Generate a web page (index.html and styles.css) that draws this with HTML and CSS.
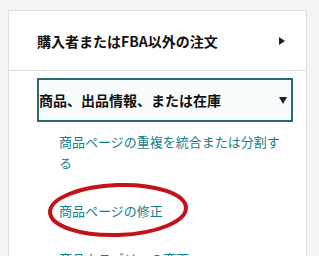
FILE: index.html
```html
<!doctype html>
<html lang="ja">
  <head>
    <meta charset="UTF-8" />
    <title>ヘルプ トピック</title>
    <link rel="stylesheet" href="styles.css">
  </head>
  <body>
    <div class="topic-panel">
      <div class="topic-row">
        <span class="topic-label">購入者またはFBA以外の注文</span>
        <span class="arrow-right"></span>
      </div>

      <div class="topic-open">
        <div class="topic-box">
          <span class="topic-label">商品、出品情報、または在庫</span>
          <span class="arrow-down"></span>
        </div>

        <ul class="sub-links">
          <li><a href="#">商品ページの重複を統合または分割する</a></li>
          <li class="marked">
            <a href="#">商品ページの修正</a>
            <!-- 赤丸の書き込み -->
            <svg class="mark" width="146" height="60" viewBox="0 0 146 60">
              <ellipse cx="72" cy="29" rx="68" ry="25" fill="none" stroke="#c41218" stroke-width="4" transform="rotate(-2 72 29)" />
            </svg>
          </li>
          <li><a href="#">商品カテゴリーの変更</a></li>
        </ul>
      </div>
    </div>
  </body>
</html>
```

FILE: styles.css
```css
body {
  margin: 0;
  padding: 10px 12px 0 8px;
  background: #f4f5f5;
  font-family: 'Noto Sans CJK JP', 'Liberation Sans', sans-serif;
  overflow: hidden;
}

.topic-panel {
  background: #fff;
  border: 1px solid #dedede;
  border-bottom: none;
  height: 260px;
}

.topic-row {
  height: 59px;
  display: flex;
  align-items: center;
  justify-content: space-between;
  padding: 0 21px 0 28px;
  border-bottom: 1px solid #dedede;
}

.topic-label {
  font-size: 14px;
  font-weight: bold;
  color: #111;
  line-height: 20px;
}

.arrow-right {
  width: 0;
  height: 0;
  border-top: 4px solid transparent;
  border-bottom: 4px solid transparent;
  border-left: 6px solid #13262a;
}

.topic-open {
  padding: 7px 13px 0 28px;
}

.topic-box {
  height: 40px;
  display: flex;
  align-items: center;
  justify-content: space-between;
  padding: 0 4px 0 0;
  border: 2px solid #2b6b6c;
  background: #f8fcfc;
}

.arrow-down {
  width: 0;
  height: 0;
  border-left: 4px solid transparent;
  border-right: 4px solid transparent;
  border-top: 7px solid #13262a;
}

.sub-links {
  list-style: none;
  margin: 9px 0 0;
  padding: 0 10px 0 22px;
}

.sub-links li {
  margin-bottom: 27px;
  font-size: 13px;
  line-height: 21px;
}

.sub-links a {
  color: #16808c;
  text-decoration: none;
}

.marked {
  position: relative;
}

.mark {
  position: absolute;
  left: -13px;
  top: -19px;
}
```
